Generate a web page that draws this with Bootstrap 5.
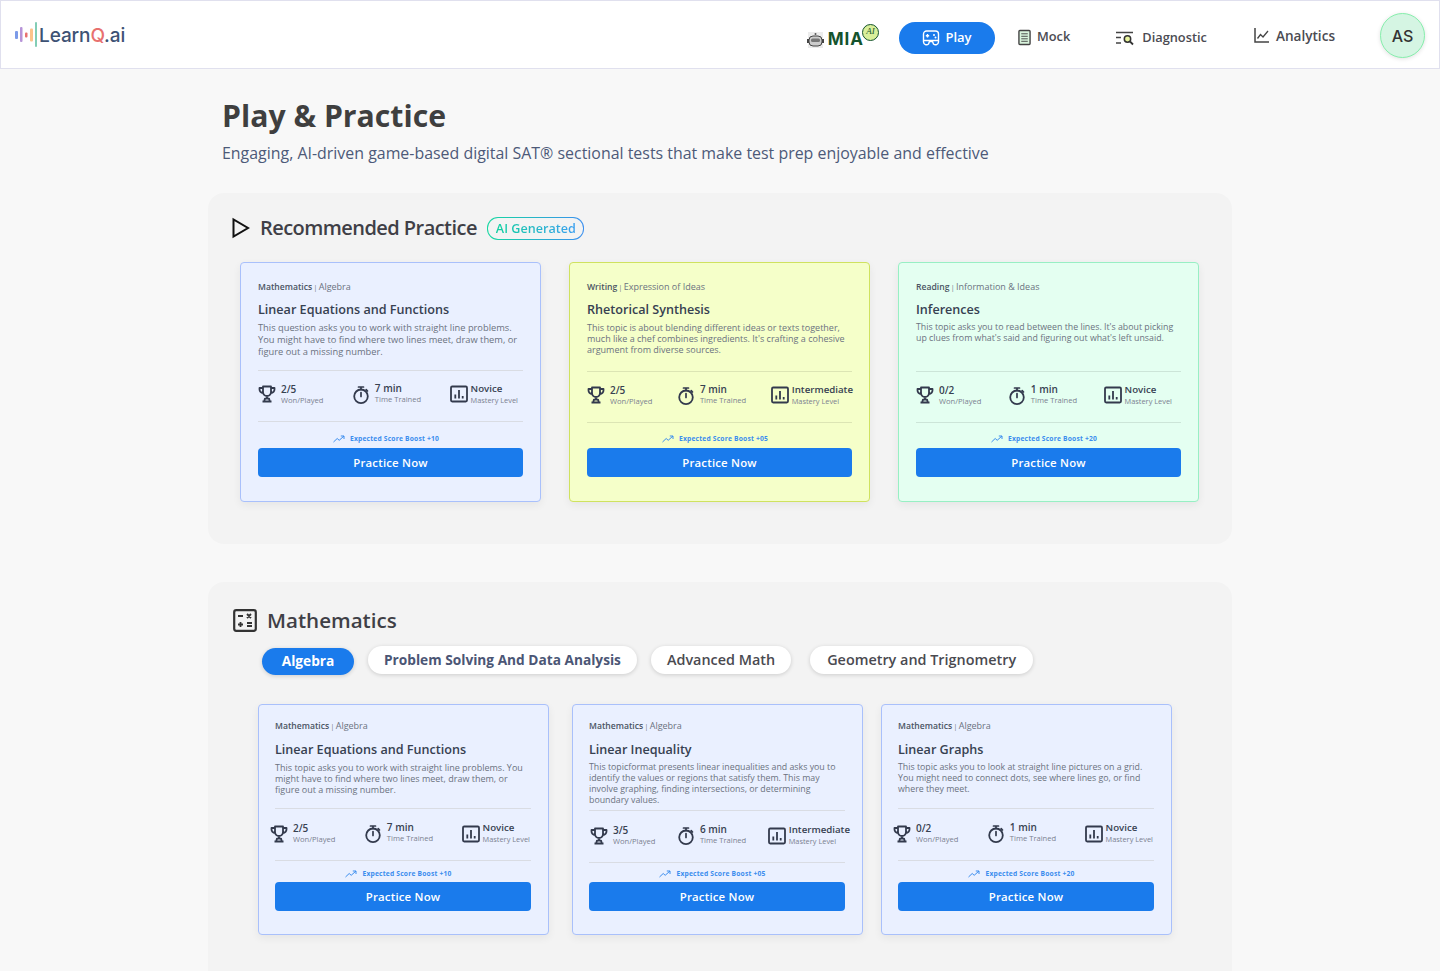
<!DOCTYPE html>
<html lang="en">
<head>
    <meta charset="UTF-8">
    <title>LearnQ.ai</title>
    <meta name="viewport" content="width=device-width, initial-scale=1">
    <link href="https://cdn.jsdelivr.net/npm/bootstrap@5.3.0/dist/css/bootstrap.min.css" rel="stylesheet">
    <style>
        html, body { height: 971px; overflow: hidden; }
        body { background: #f8f8f8; font-family: "Open Sans", "Noto Sans", sans-serif; color: #3f3f46; }
        .icon-defs { position: absolute; width: 0; height: 0; }

        .top-bar { height: 69px; background: #fff; border: 1px solid #e0e0ee; padding: 0 14px; }
        .brand-name { font-family: Inter, sans-serif; font-weight: 500; font-size: 19px; color: #3d5274; margin: 3px 0 0 2px; letter-spacing: -.1px; }
        .brand-name span { color: #e8716f; }
        .nav-entry { font-size: 12.8px; color: #4b4b52; font-weight: 600; display: flex; align-items: center; gap: 7px; text-decoration: none; }
        .mia-group { margin: 11px 20px 0 0; }
        .mia-word { font-family: Inter, sans-serif; font-weight: 700; font-size: 17px; letter-spacing: 1px; color: #14532d; }
        .mia-ai { width: 17px; height: 17px; border-radius: 50%; background: #d9ef9a; border: 1px solid #14532d; font-family: "Liberation Serif", serif; font-size: 9px; font-style: italic; display: flex; align-items: center; justify-content: center; color: #14532d; margin: -16px 0 0 -2px; }
        .play-btn { width: 96px; height: 32px; border-radius: 16px; background: #1a7bec; color: #fff; justify-content: center; margin-top: 7px; font-size: 13px; gap: 5px; }
        .mock-link { margin: 5px 0 0 23px; gap: 6px; }
        .diag-link { margin: 7px 0 0 45px; gap: 8px; }
        .stat-link { margin: 3px 0 0 47px; font-size: 13.6px; gap: 7px; }
        .user-chip { width: 45px; height: 45px; border-radius: 50%; background: #d5f5e3; border: 1px solid #86efac; box-shadow: 0 1px 4px rgba(0,0,0,.12); font-family: Inter, sans-serif; font-size: 16px; font-weight: 500; color: #333; margin: 2px 0 0 45px; }

        .page-wrap { width: 1024px; margin-left: 208px; }
        .page-title { font-size: 30.2px; font-weight: 700; color: #3f3f3f; margin: 0; padding: 29px 0 0 14px; line-height: 36px; }
        .page-sub { font-size: 15.93px; color: #4d5a78; padding: 9px 0 0 14px; margin: 0 0 29px; line-height: 21px; }

        .block-panel { background: #f3f3f3; border-radius: 16px; }
        .panel-rec { height: 351px; padding: 21px 0 0 24px; margin-bottom: 38px; }
        .panel-math { height: 389px; padding: 24px 0 0 25px; border-radius: 16px 16px 0 0; }
        .panel-head { font-size: 20.6px; font-weight: 600; color: #3f3f46; line-height: 28px; margin-left: 10px; }
        .head-tight { font-size: 20px; letter-spacing: -.55px; }
        .ai-chip { font-size: 12.6px; font-weight: 600; line-height: 21px; padding: 0 7px 0 8px; border-radius: 11px; border: 1px solid transparent; background: linear-gradient(#f3f3f3, #f3f3f3) padding-box, linear-gradient(90deg, #14d8a0, #3b8ff0) border-box; margin-left: 10px; }
        .ai-chip span { background: linear-gradient(90deg, #10d0a0, #3b9ff0); -webkit-background-clip: text; background-clip: text; color: transparent; }
        .rec-row { gap: 28px; margin: 20px 0 0 8px; }

        .topic-tile { width: 301px; height: 240px; border: 1px solid #a9c0fb; border-radius: 4px; background: #eaf0ff; padding: 18px 17px 0; box-shadow: 0 3px 8px rgba(0,0,0,.06); display: flex; flex-direction: column; }
        .tile-yellow { background: #f5ffc9; border-color: #cfe25f; }
        .tile-green { background: #e4fff1; border-color: #98efc4; }
        .tile-eyebrow { font-size: 9px; color: #6b7280; line-height: 12px; }
        .tile-eyebrow b { font-weight: 600; font-size: 8.6px; color: #4b5563; }
        .tile-sep { font-size: 7px; margin: 0 -1px; }
        .tile-title { font-size: 12.6px; font-weight: 600; color: #374151; line-height: 17px; margin: 7px 0 4px; }
        .tile-desc { font-size: 9px; color: #6b7280; line-height: 12px; margin: 0; height: 36px; }
        .desc-wide { font-size: 9.3px; }
        .desc-slim { font-size: 8.8px; }
        .tile-rule { border-top: 1px solid #d9dce3; margin: 12px 0 0; }
        .tile-yellow .tile-rule, .tile-green .tile-rule { border-color: rgba(0,0,0,.1); }
        .tile-yellow .tile-desc, .tile-green .tile-desc { height: 37px; line-height: 11px; }
        .tile-yellow .boost-line, .tile-green .boost-line { margin-top: 11px; }
        .stat-row { display: flex; justify-content: space-between; align-items: center; height: 50px; padding-bottom: 4px; }
        .stat-item { display: flex; align-items: center; gap: 5px; }
        .stat-item:nth-child(2) { margin-top: -2px; }
        .stat-item:nth-child(2) svg { margin-top: 3px; }
        .stat-item:nth-child(3) { gap: 3px; }
        .stat-item:nth-child(3) .stat-big { font-size: 9.7px; }
        .stat-item:nth-child(3) .stat-small { font-size: 7.4px; }
        .stat-ico { color: #333a4d; flex-shrink: 0; }
        .stat-big { font-size: 10px; font-weight: 600; color: #374151; line-height: 12px; }
        .stat-small { font-size: 7.6px; color: #7b8190; line-height: 11px; }
        .boost-line { display: flex; justify-content: center; align-items: center; gap: 5px; font-size: 6.7px; font-weight: 700; color: #3b8dee; line-height: 10px; margin-top: 12px; padding-right: 9px; letter-spacing: .2px; }
        .tile-btn { background: #1a7bec; color: #fff; border: 0; border-radius: 4px; height: 29px; font-size: 11.4px; font-weight: 600; padding: 0; margin-top: 4px; width: 100%; letter-spacing: .2px; }
        .tile-btn:hover { background: #1a7bec; color: #fff; }

        .pills-row { gap: 14px; margin: 12px 0 0 29px; }
        .topic-pill { height: 28px; border-radius: 14px; background: #fff; border: 0; font-size: 13.7px; font-weight: 700; color: #4b5675; padding: 0 16px; box-shadow: 0 1px 4px rgba(0,0,0,.16); display: flex; align-items: center; }
        .pill-on { background: #1a7bec; color: #fff; padding: 0; width: 92px; justify-content: center; height: 27px; margin-top: 2px; }
        .pill-plain { color: #4a4a50; font-weight: 600; font-size: 14.4px; }
        .pill-last { margin-left: 5px; padding: 0 17px; }

        .math-row { margin: 29px 0 0 25px; }
        .math-tile { width: 291px; height: 231px; padding: 15px 17px 0 16px; }
        .gap-extra { margin-left: 23px; margin-right: 18px; }
        .math-tile .tile-desc { line-height: 11px; height: 33px; }
        .math-tile .tile-title { margin: 8px 0 4px; }
        .math-tile .tile-rule { margin-top: 13px; }
        .math-tile .stat-row { height: 51px; padding-bottom: 2px; }
        .math-tile .tile-desc.four-line { height: 44px; }
        .math-tile .four-line + .tile-rule { margin-top: 4px; }
        .math-tile .boost-line { margin-top: 8px; }
        .math-tile .four-line ~ .boost-line { margin-top: 6px; }
        .math-tile .tile-btn { margin-top: 3px; }
        .stats-a { margin-left: -5px; margin-right: 1px; }
        .stats-b { margin-left: 1px; margin-right: -5px; }
        .stats-c { margin-right: 5px; }
        .stats-d { margin-right: -1px; }
        .stats-e { margin-right: 9px; }
    </style>
</head>
<body>

<svg class="icon-defs">
    <defs>
        <symbol id="ic-trophy" viewBox="0 0 18 18"><path d="M5 1.500h8v5.500a4 4 0 0 1-8 0zM5 3H1.500v1.300A3.600 3.600 0 0 0 5 8M13 3h3.500v1.300A3.600 3.600 0 0 1 13 8M9 11v2.500M6.500 16.500v-1.500a1.500 1.500 0 0 1 1.500-1.500h2a1.500 1.500 0 0 1 1.500 1.500v1.500M4.500 16.500h9" fill="none" stroke="currentColor" stroke-width="1.800" stroke-linejoin="round"/></symbol>
        <symbol id="ic-timer" viewBox="0 0 18 18"><circle cx="9" cy="10.300" r="6.800" fill="none" stroke="currentColor" stroke-width="1.800"/><path d="M6.500 1h5M9 1v2.500M9 6.500v4M14.200 3.700l1.300 1.300" fill="none" stroke="currentColor" stroke-width="1.700" stroke-linecap="round"/></symbol>
        <symbol id="ic-level" viewBox="0 0 18 18"><rect x="1" y="1.500" width="16" height="15" rx="1.200" fill="none" stroke="currentColor" stroke-width="1.800"/><path d="M5.300 13.500V9.500M9 13.500V5M12.700 13.500v-2.500" fill="none" stroke="currentColor" stroke-width="1.800"/></symbol>
        <symbol id="ic-trend" viewBox="0 0 12 8"><path d="M.5 7l3.700-3.500 2 1.800L11 1M7.800 1H11v3" fill="none" stroke="currentColor" stroke-width="1"/></symbol>
    </defs>
</svg>

<nav class="top-bar d-flex align-items-center">
    <svg width="22" height="26" viewBox="0 0 22 26" class="flex-shrink-0">
        <rect x="0" y="9" width="3" height="8" rx="1" fill="#7c9be8"/>
        <rect x="5" y="5" width="2.500" height="15" rx="1" fill="#b794d8"/>
        <rect x="10" y="10.500" width="2.500" height="5" rx="1" fill="#e8716f"/>
        <rect x="15" y="6.500" width="3" height="13" rx="1" fill="#fcc48c"/>
        <rect x="20" y="0" width="2" height="25" rx="1" fill="#82cdb5"/>
    </svg>
    <span class="brand-name">Learn<span>Q</span>.ai</span>
    <div class="d-flex align-items-center ms-auto">
        <div class="d-flex align-items-center mia-group">
            <svg width="17" height="16" viewBox="0 0 17 16" class="me-1"><rect x="1" y="0" width="15" height="16" fill="#ececec"/><circle cx="8.500" cy="2" r="1" fill="#555"/><rect x="2" y="4" width="13" height="10" rx="4" fill="#ccc" stroke="#444"/><rect x="4" y="6.500" width="9" height="3.500" rx="1.500" fill="#777"/><rect x="0" y="7" width="2" height="4" fill="#444"/><rect x="15" y="7" width="2" height="4" fill="#444"/></svg>
            <span class="mia-word">MIA</span><span class="mia-ai">AI</span>
        </div>
        <a class="nav-entry play-btn" href="#">
            <svg width="18" height="17" viewBox="0 0 18 17"><path d="M4.500 1h9a3 3 0 0 1 3 3v8a3 3 0 0 1-5 2l-1-2.500h-3l-1 2.500a3 3 0 0 1-5-2V4a3 3 0 0 1 3-3zM1.500 10.500h15M5.500 4v3.500M3.800 5.700h3.400" fill="none" stroke="#fff" stroke-width="1.400"/><circle cx="12" cy="5" r="1" fill="#fff"/><circle cx="13.500" cy="7.500" r="1" fill="#fff"/></svg>
            Play
        </a>
        <a class="nav-entry mock-link" href="#">
            <svg width="13" height="17" viewBox="0 0 14 17"><rect x="1" y="1" width="12" height="15" rx="1" fill="#d8f3dc" stroke="#444" stroke-width="1.500"/><path d="M3.500 4.500h7M3.500 7.200h7M3.500 9.900h7M3.500 12.600h7" stroke="#444"/></svg>
            Mock
        </a>
        <a class="nav-entry diag-link" href="#">
            <svg width="19" height="15" viewBox="0 0 19 15"><path d="M1 1.500h17M1 6.500h5M1 12h5" stroke="#444" stroke-width="1.500"/><circle cx="12.500" cy="8" r="3.200" fill="#e9f59d" stroke="#333" stroke-width="1.500"/><path d="M15 10.500l3 3" stroke="#333" stroke-width="1.800"/></svg>
            Diagnostic
        </a>
        <a class="nav-entry stat-link" href="#">
            <svg width="15" height="15" viewBox="0 0 15 15"><path d="M1 0v14h14" fill="none" stroke="#444" stroke-width="1.500"/><path d="M3.500 10.500l3-4 2.500 2.500 5-6" fill="none" stroke="#444" stroke-width="1.300"/></svg>
            Analytics
        </a>
        <div class="user-chip d-flex align-items-center justify-content-center">AS</div>
    </div>
</nav>

<main class="page-wrap">
    <h1 class="page-title">Play &amp; Practice</h1>
    <p class="page-sub">Engaging, AI-driven game-based digital SAT® sectional tests that make test prep enjoyable and effective</p>

    <section class="block-panel panel-rec">
        <div class="d-flex align-items-center">
            <svg width="18" height="22" viewBox="0 0 18 22" class="flex-shrink-0"><path d="M1.500 2.500v17L16 11z" fill="none" stroke="#111" stroke-width="2"/></svg>
            <span class="panel-head head-tight">Recommended Practice</span>
            <span class="ai-chip"><span>AI Generated</span></span>
        </div>
        <div class="d-flex rec-row" id="recCards"></div>
    </section>

    <section class="block-panel panel-math">
        <div class="d-flex align-items-center">
            <svg width="24" height="23" viewBox="0 0 24 23" class="flex-shrink-0"><rect x="1.200" y="1.200" width="21.600" height="20.600" rx="2" fill="none" stroke="#333" stroke-width="2.200"/><path d="M5 7h5M14 5l4 4M18 5l-4 4M5 15.500h5M7.500 13v5M14 14h5M14 17h5" stroke="#333" stroke-width="1.800"/></svg>
            <span class="panel-head">Mathematics</span>
        </div>
        <div class="d-flex align-items-start pills-row">
            <button class="topic-pill pill-on">Algebra</button>
            <button class="topic-pill">Problem Solving And Data Analysis</button>
            <button class="topic-pill pill-plain">Advanced Math</button>
            <button class="topic-pill pill-plain pill-last">Geometry and Trignometry</button>
        </div>
        <div class="d-flex math-row" id="mathCards"></div>
    </section>
</main>

<script src="https://cdn.jsdelivr.net/npm/bootstrap@5.3.0/dist/js/bootstrap.bundle.min.js"></script>
<script>
    // card data, same markup for both sections
    const recCards = [
        { cls: "", sub: "Mathematics", topic: "Algebra", title: "Linear Equations and Functions", desc: "This question asks you to work with straight line problems. You might have to find where two lines meet, draw them, or figure out a missing number.", descCls: "desc-wide", won: "2/5", time: "7 min", level: "Novice", boost: "+10", stats: "stats-c" },
        { cls: "tile-yellow", sub: "Writing", topic: "Expression of Ideas", title: "Rhetorical Synthesis", desc: "This topic is about blending different ideas or texts together, much like a chef combines ingredients. It's crafting a cohesive argument from diverse sources.", won: "2/5", time: "7 min", level: "Intermediate", boost: "+05", stats: "stats-d" },
        { cls: "tile-green", sub: "Reading", topic: "Information &amp; Ideas", title: "Inferences", desc: "This topic asks you to read between the lines. It's about picking up clues from what's said and figuring out what's left unsaid.", descCls: "desc-slim", won: "0/2", time: "1 min", level: "Novice", boost: "+20", stats: "stats-e" }
    ];
    const mathCards = [
        { cls: "math-tile", sub: "Mathematics", topic: "Algebra", title: "Linear Equations and Functions", desc: "This topic asks you to work with straight line problems. You might have to find where two lines meet, draw them, or figure out a missing number.", won: "2/5", time: "7 min", level: "Novice", boost: "+10", stats: "stats-a" },
        { cls: "math-tile gap-extra", sub: "Mathematics", topic: "Algebra", title: "Linear Inequality", desc: "This topicformat presents linear inequalities and asks you to identify the values or regions that satisfy them. This may involve graphing, finding intersections, or determining boundary values.", descCls: "desc-slim four-line", won: "3/5", time: "6 min", level: "Intermediate", boost: "+05", stats: "stats-b" },
        { cls: "math-tile", sub: "Mathematics", topic: "Algebra", title: "Linear Graphs", desc: "This topic asks you to look at straight line pictures on a grid. You might need to connect dots, see where lines go, or find where they meet.", descCls: "desc-slim", won: "0/2", time: "1 min", level: "Novice", boost: "+20", stats: "stats-a" }
    ];

    function useIcon(id) {
        return `<svg width="18" height="18" class="stat-ico"><use href="#${id}"/></svg>`;
    }

    function tileHtml(c) {
        return `<article class="topic-tile ${c.cls}">
            <div class="tile-eyebrow"><b>${c.sub}</b> <span class="tile-sep">|</span> ${c.topic}</div>
            <div class="tile-title">${c.title}</div>
            <p class="tile-desc ${c.descCls || ""}">${c.desc}</p>
            <div class="tile-rule"></div>
            <div class="stat-row ${c.stats}">
                <div class="stat-item">${useIcon("ic-trophy")}<div><div class="stat-big">${c.won}</div><div class="stat-small">Won/Played</div></div></div>
                <div class="stat-item">${useIcon("ic-timer")}<div><div class="stat-big">${c.time}</div><div class="stat-small">Time Trained</div></div></div>
                <div class="stat-item">${useIcon("ic-level")}<div><div class="stat-big">${c.level}</div><div class="stat-small">Mastery Level</div></div></div>
            </div>
            <div class="tile-rule mt-0"></div>
            <div class="boost-line"><svg width="12" height="8"><use href="#ic-trend"/></svg>Expected Score Boost ${c.boost}</div>
            <button class="btn tile-btn">Practice Now</button>
        </article>`;
    }

    document.getElementById("recCards").innerHTML = recCards.map(tileHtml).join("");
    document.getElementById("mathCards").innerHTML = mathCards.map(tileHtml).join("");
</script>
</body>
</html>
